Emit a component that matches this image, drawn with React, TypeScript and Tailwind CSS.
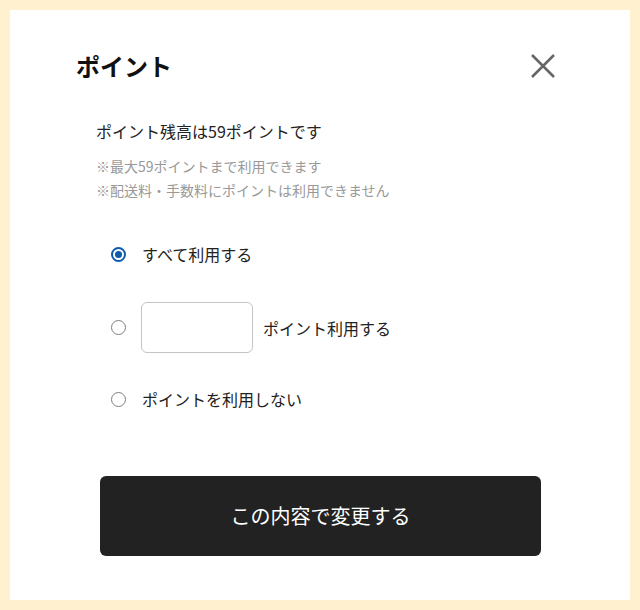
import React, { useState } from "react";

type Mode = "all" | "partial" | "none";

const Radio = ({ checked }: { checked: boolean }) => (
  <span
    className={
      checked
        ? "flex h-[15px] w-[15px] shrink-0 items-center justify-center rounded-full border-2 border-[#0b5cad] bg-white"
        : "flex h-[15px] w-[15px] shrink-0 items-center justify-center rounded-full border border-[#808080] bg-white"
    }
  >
    {checked && <span className="h-[7px] w-[7px] rounded-full bg-[#0b5cad]" />}
  </span>
);

export default function App() {
  const [mode, setMode] = useState<Mode>("all");
  const [amount, setAmount] = useState("");

  return (
    <div
      className="min-h-[610px] w-full bg-[#fff1cf] p-[10px]"
      style={{ fontFamily: '"Noto Sans CJK JP", "Noto Sans", sans-serif' }}
    >
      <div className="flex h-[590px] flex-col bg-white pl-[66px] pr-[73px] pt-[40px]">
        <div className="flex h-[32px] items-center justify-between">
          <h2 className="text-[24px] font-bold leading-[32px] text-[#111]">ポイント</h2>
          <button className="flex h-[28px] w-[28px] items-center justify-center" aria-label="閉じる">
            <svg width="26" height="26" viewBox="0 0 26 26" fill="none">
              <path d="M2 2L24 24M24 2L2 24" stroke="#666" strokeWidth="2.6" />
            </svg>
          </button>
        </div>

        <div className="mt-[37px] pl-[20px]">
          <p className="text-[16px] leading-[24px] text-[#222]">ポイント残高は59ポイントです</p>
          <div className="mt-[11px] text-[14px] leading-[24px] text-[#999]">
            <p>※最大59ポイントまで利用できます</p>
            <p>※配送料・手数料にポイントは利用できません</p>
          </div>
        </div>

        <div className="mt-[40px] flex flex-col pl-[35px] text-[16px] text-[#222]">
          <label className="flex h-[24px] cursor-pointer items-center gap-[16px]" onClick={() => setMode("all")}>
            <Radio checked={mode === "all"} />
            <span className="leading-[24px]">すべて利用する</span>
          </label>
          <label className="mt-[36px] flex h-[51px] cursor-pointer items-center" onClick={() => setMode("partial")}>
            <Radio checked={mode === "partial"} />
            <input
              value={amount}
              onChange={(e) => setAmount(e.target.value)}
              className="ml-[15px] h-[51px] w-[112px] rounded-[6px] border border-[#c4c4c4] px-3 outline-none"
            />
            <span className="ml-[10px] leading-[24px]">ポイント利用する</span>
          </label>
          <label className="mt-[34px] flex h-[24px] cursor-pointer items-center gap-[16px]" onClick={() => setMode("none")}>
            <Radio checked={mode === "none"} />
            <span className="leading-[24px]">ポイントを利用しない</span>
          </label>
        </div>

        <button className="ml-[24px] mt-[65px] flex h-[80px] w-[441px] items-center justify-center rounded-[6px] bg-[#222] text-[20px] text-white">
          この内容で変更する
        </button>
      </div>
    </div>
  );
}
